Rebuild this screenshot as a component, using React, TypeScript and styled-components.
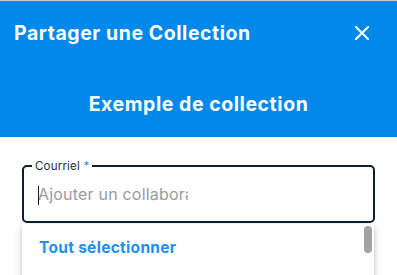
import React from "react";
import styled, { createGlobalStyle } from "styled-components";

const Global = createGlobalStyle`
  html, body { margin: 0; padding: 0; height: 275px; overflow: hidden; background: #ffffff; }
  body { font-family: Inter, "Noto Sans", sans-serif; }
  * { box-sizing: border-box; }
`;

const Dialog = styled.div`
  width: 397px;
  height: 275px;
  display: flex;
  flex-direction: column;
  border-top: 1px solid #c9ccd0;
  overflow: hidden;
`;

const Header = styled.header`
  background: #0288e9;
  color: #ffffff;
  height: 136px;
  padding: 19px 14px 0 14px;
  display: flex;
  flex-direction: column;
`;

const TitleRow = styled.div`
  display: flex;
  align-items: center;
  justify-content: space-between;
  height: 26px;
`;

const Title = styled.h1`
  margin: 0;
  font-size: 19.5px;
  font-weight: 700;
  line-height: 26px;
  letter-spacing: 0.55px;
`;

const CloseButton = styled.button`
  width: 26px;
  height: 26px;
  margin-right: 8px;
  padding: 0;
  border: none;
  background: transparent;
  display: flex;
  align-items: center;
  justify-content: center;
  cursor: pointer;
`;

const Subtitle = styled.h2`
  margin: 45px 0 0 0;
  text-align: center;
  font-size: 19.5px;
  font-weight: 700;
  line-height: 26px;
  letter-spacing: 0.55px;
`;

const Body = styled.div`
  position: relative;
  flex: 1;
  padding: 22px 22px 0 22px;
`;

const Field = styled.fieldset`
  position: relative;
  margin: 0;
  padding: 0 12px 0 14px;
  border: 2px solid #0c1e36;
  border-radius: 5px;
  height: 64px;
  display: flex;
  align-items: center;
`;

const Legend = styled.legend`
  margin-left: -6px;
  padding: 0 3px;
  font-size: 11.5px;
  line-height: 14px;
  letter-spacing: 0.2px;
  color: #1b2b44;
`;

const Required = styled.span`
  color: #1e8ff0;
`;

const Caret = styled.span`
  position: absolute;
  left: 14px;
  top: 13px;
  width: 1px;
  height: 19px;
  background: #0c1e36;
`;

const Input = styled.input`
  width: 150px;
  margin-top: -6px;
  border: none;
  outline: none;
  padding: 0;
  font-family: inherit;
  font-size: 16px;
  letter-spacing: 0.2px;
  color: #1b2b44;
  background: transparent;
  &::placeholder {
    color: #9a9a9a;
  }
`;

const Listbox = styled.ul`
  position: absolute;
  top: 87px;
  left: 22px;
  width: 352px;
  height: 80px;
  margin: 0;
  padding: 6px 0 0 0;
  list-style: none;
  background: #ffffff;
  box-shadow: 0 4px 10px rgba(0, 0, 0, 0.2), 0 1px 3px rgba(0, 0, 0, 0.12);
  border-radius: 0 0 4px 4px;
`;

const Option = styled.li`
  padding: 0 17px;
  height: 34px;
  display: flex;
  align-items: center;
  font-size: 15.5px;
  font-weight: 700;
  letter-spacing: 0.3px;
  color: #1e8ff0;
`;

const Thumb = styled.div`
  position: absolute;
  top: 2px;
  right: 2px;
  width: 8px;
  height: 27px;
  border-radius: 4px;
  background: #a3a3a3;
`;

export default function App() {
  return (
    <>
      <Global />
      <Dialog>
        <Header>
          <TitleRow>
            <Title>Partager une Collection</Title>
            <CloseButton aria-label="Fermer">
              <svg width="14" height="14" viewBox="0 0 14 14">
                <path d="M1 1 L13 13 M13 1 L1 13" stroke="#ffffff" strokeWidth="2" strokeLinecap="square" />
              </svg>
            </CloseButton>
          </TitleRow>
          <Subtitle>Exemple de collection</Subtitle>
        </Header>
        <Body>
          <Field>
            <Legend>
              Courriel <Required>*</Required>
            </Legend>
            <Caret />
            <Input placeholder="Ajouter un collaborateur" />
          </Field>
          <Listbox>
            <Option>Tout sélectionner</Option>
            <Thumb />
          </Listbox>
        </Body>
      </Dialog>
    </>
  );
}
